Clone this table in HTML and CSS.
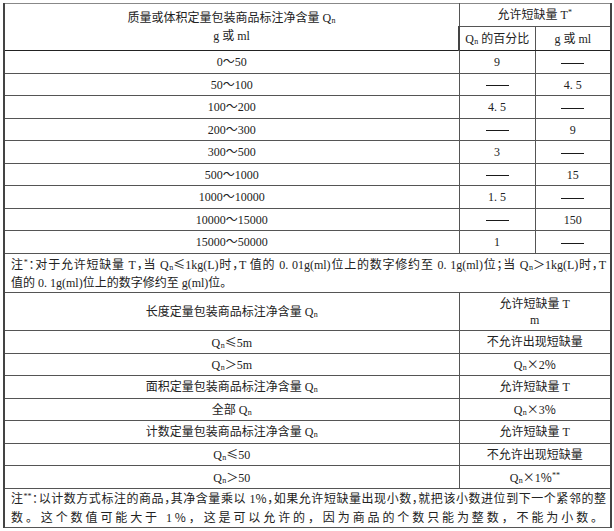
FILE: index.html
```html
<!DOCTYPE html>
<html lang="zh">
<head>
<meta charset="utf-8">
<link rel="stylesheet" href="styles.css">
</head>
<body>
<table class="spec">
  <colgroup><col class="c1"><col class="c2"><col class="c3"></colgroup>
  <tbody>
    <tr class="h1">
      <td rowspan="2" class="two">质量或体积定量包装商品标注净含量 Q<sub>n</sub><br>g 或 ml</td>
      <td colspan="2">允许短缺量 T<sup>*</sup></td>
    </tr>
    <tr class="h2 strong">
      <td>Q<sub>n</sub> 的百分比</td>
      <td>g 或 ml</td>
    </tr>
    <tr class="ra"><td>0～50</td><td>9</td><td><span class="dash"></span></td></tr>
    <tr class="rb"><td>50～100</td><td><span class="dash"></span></td><td>4. 5</td></tr>
    <tr class="ra"><td>100～200</td><td>4. 5</td><td><span class="dash"></span></td></tr>
    <tr class="rb"><td>200～300</td><td><span class="dash"></span></td><td>9</td></tr>
    <tr class="ra"><td>300～500</td><td>3</td><td><span class="dash"></span></td></tr>
    <tr class="rb"><td>500～1000</td><td><span class="dash"></span></td><td>15</td></tr>
    <tr class="ra"><td>1000～10000</td><td>1. 5</td><td><span class="dash"></span></td></tr>
    <tr class="rb"><td>10000～15000</td><td><span class="dash"></span></td><td>150</td></tr>
    <tr class="ra"><td>15000～50000</td><td>1</td><td><span class="dash"></span></td></tr>
    <tr class="note">
      <td colspan="3"><span class="jl">注<sup>*</sup>：对于允许短缺量 T，当 Q<sub>n</sub><span class="sym">≤</span>1kg(L)时，T 值的 0. 01g(ml)位上的数字修约至 0. 1g(ml)位；当 Q<sub>n</sub><span class="sym">＞</span>1kg(L)时，T</span><span class="ln">值的 0. 1g(ml)位上的数字修约至 g(ml)位。</span></td>
    </tr>
    <tr class="lh">
      <td>长度定量包装商品标注净含量 Q<sub>n</sub></td>
      <td colspan="2" class="tight">允许短缺量 T<br>m</td>
    </tr>
    <tr class="ra"><td>Q<sub>n</sub><span class="sym">≤</span>5m</td><td colspan="2">不允许出现短缺量</td></tr>
    <tr class="rb"><td>Q<sub>n</sub><span class="sym">＞</span>5m</td><td colspan="2">Q<sub>n</sub><span class="sym">×</span>2<span class="sym">%</span></td></tr>
    <tr class="ra"><td>面积定量包装商品标注净含量 Q<sub>n</sub></td><td colspan="2">允许短缺量 T</td></tr>
    <tr class="rb"><td>全部 Q<sub>n</sub></td><td colspan="2">Q<sub>n</sub><span class="sym">×</span>3<span class="sym">%</span></td></tr>
    <tr class="ra"><td>计数定量包装商品标注净含量 Q<sub>n</sub></td><td colspan="2">允许短缺量 T</td></tr>
    <tr class="rb"><td>Q<sub>n</sub><span class="sym">≤</span>50</td><td colspan="2">不允许出现短缺量</td></tr>
    <tr class="ra"><td>Q<sub>n</sub><span class="sym">＞</span>50</td><td colspan="2">Q<sub>n</sub><span class="sym">×</span>1<span class="sym">%</span><sup>**</sup></td></tr>
    <tr class="note last">
      <td colspan="3"><span class="jl">注<sup>**</sup>：以计数方式标注的商品，其净含量乘以 1<span class="sym">%</span>，如果允许短缺量出现小数，就把该小数进位到下一个紧邻的整</span><span class="ln wide">数。这个数值可能大于 1<span class="sym">%</span>，这是可以允许的，因为商品的个数只能为整数，不能为小数。</span></td>
    </tr>
  </tbody>
</table>
</body>
</html>
```

FILE: styles.css
```css
html, body {
  margin: 0;
  padding: 0;
  background: #ffffff;
}

body {
  padding: 3px 0 0 3px;
  font-family: "Liberation Serif", "Noto Sans CJK SC", serif;
  font-size: 12px;
  color: #222222;
}

.spec {
  border-collapse: collapse;
  table-layout: fixed;
  width: 607px;
  border-top: 1px solid #888888;
  border-left: 2px solid #444444;
  border-right: 2px solid #444444;
  border-bottom: 1px solid #555555;
}

.c1 { width: 455px; }
.c2 { width: 76px; }
.c3 { width: 76px; }

.spec td {
  border: 1px solid #555555;
  text-align: center;
  vertical-align: middle;
  padding: 0;
  line-height: 16px;
}

.spec td:first-child { border-left: 2px solid #444444; }
.spec td:last-child { border-right: 2px solid #444444; }

.h1 { height: 23px; }
.h2 { height: 24px; }
.h1 td { border-top: none; }
.strong td, .h1 td.two { border-bottom: 1px solid #222222; }
.two { line-height: 18px !important; }

.ra { height: 23px; }
.rb { height: 22px; }

.note { height: 39px; }
.note td {
  text-align: left;
  padding: 0 4px 0 6px;
  line-height: 18px;
  font-feature-settings: "halt";
}
.note.last td { border-bottom: none; }

.jl {
  display: block;
  white-space: nowrap;
  text-align: justify;
  text-align-last: justify;
}
.ln { display: block; white-space: nowrap; }
.ln.wide {
  font-feature-settings: normal;
  letter-spacing: 2.9px;
}

.lh { height: 38px; }

.sym {
  font-family: "Noto Sans CJK SC", sans-serif;
  font-size: 12px;
  font-feature-settings: normal;
}

sub {
  font-size: 8px;
  vertical-align: -1px;
  line-height: 0;
  margin-left: 0.5px;
}
sup {
  font-size: 8px;
  vertical-align: 4px;
  line-height: 0;
}

.dash {
  display: inline-block;
  width: 23px;
  height: 0;
  border-top: 1.5px solid #1a1a1a;
  vertical-align: middle;
}
```
